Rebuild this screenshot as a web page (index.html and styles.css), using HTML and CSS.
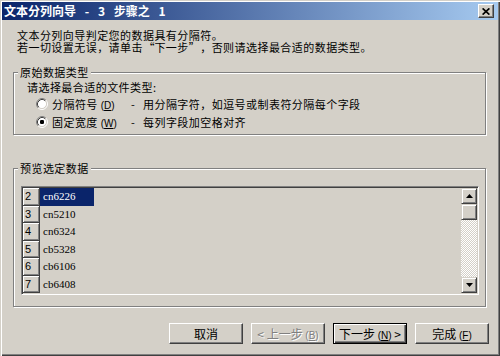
FILE: index.html
```html
<!DOCTYPE html>
<html lang="zh-CN">
<head>
<meta charset="utf-8">
<title>文本分列向导</title>
<link rel="stylesheet" href="styles.css">
</head>
<body>
<div class="window">
  <div class="titlebar">
    <span class="title">文本分列向导 - 3 步骤之 1</span>
    <span class="close-btn"><svg width="8" height="7" viewBox="0 0 8 7"><path d="M0.6 0.4 L7.4 6.6 M7.4 0.4 L0.6 6.6" stroke="#000" stroke-width="1.7" fill="none"/></svg></span>
  </div>
  <div class="content">
    <p class="intro">文本分列向导判定您的数据具有分隔符。<br>若一切设置无误，请单击<span class="q q-open">“</span>下一步<span class="q q-close">”</span>，否则请选择最合适的数据类型。</p>
    <div class="group group-type">
      <div class="legend">原始数据类型</div>
      <div class="prompt">请选择最合适的文件类型:</div>
      <div class="radio-row first">
        <svg class="radio" width="12" height="12" viewBox="0 0 12 12">
          <circle cx="6" cy="6" r="4.5" fill="#fff"/>
          <path d="M2.11 9.89 A5.5 5.5 0 0 1 9.89 2.11" stroke="#808080" fill="none"/>
          <path d="M9.89 2.11 A5.5 5.5 0 0 1 2.11 9.89" stroke="#fff" fill="none"/>
          <path d="M2.82 9.18 A4.5 4.5 0 0 1 9.18 2.82" stroke="#404040" fill="none"/>
          <path d="M9.18 2.82 A4.5 4.5 0 0 1 2.82 9.18" stroke="#d4d0c8" fill="none"/>
        </svg>
        <span class="radio-label">分隔符号 <span class="acc">(<u>D</u>)</span></span>
        <span class="dash">-</span>
        <span class="desc">用分隔字符，如逗号或制表符分隔每个字段</span>
      </div>
      <div class="radio-row second">
        <svg class="radio" width="12" height="12" viewBox="0 0 12 12">
          <circle cx="6" cy="6" r="4.5" fill="#fff"/>
          <path d="M2.11 9.89 A5.5 5.5 0 0 1 9.89 2.11" stroke="#808080" fill="none"/>
          <path d="M9.89 2.11 A5.5 5.5 0 0 1 2.11 9.89" stroke="#fff" fill="none"/>
          <path d="M2.82 9.18 A4.5 4.5 0 0 1 9.18 2.82" stroke="#404040" fill="none"/>
          <path d="M9.18 2.82 A4.5 4.5 0 0 1 2.82 9.18" stroke="#d4d0c8" fill="none"/>
          <rect x="4" y="4" width="4" height="4" rx="1.2" fill="#000"/>
        </svg>
        <span class="radio-label">固定宽度 <span class="acc">(<u>W</u>)</span></span>
        <span class="dash">-</span>
        <span class="desc">每列字段加空格对齐</span>
      </div>
    </div>
    <div class="group group-preview">
      <div class="legend">预览选定数据</div>
      <div class="preview">
        <div class="grid">
          <div class="row"><div class="num">2</div><div class="cell sel">cn6226</div></div>
          <div class="row"><div class="num">3</div><div class="cell">cn5210</div></div>
          <div class="row"><div class="num">4</div><div class="cell">cn6324</div></div>
          <div class="row"><div class="num">5</div><div class="cell">cb5328</div></div>
          <div class="row"><div class="num">6</div><div class="cell">cb6106</div></div>
          <div class="row"><div class="num">7</div><div class="cell">cb6408</div></div>
        </div>
        <div class="vscroll">
          <div class="sbtn"><svg width="7" height="4" viewBox="0 0 7 4"><path d="M0 4 H7 L3.5 0 Z" fill="#000"/></svg></div>
          <div class="thumb"></div>
          <div class="track"></div>
          <div class="sbtn"><svg width="7" height="4" viewBox="0 0 7 4"><path d="M0 0 H7 L3.5 4 Z" fill="#000"/></svg></div>
        </div>
      </div>
    </div>
    <div class="buttons">
      <div class="btn">取消</div>
      <div class="btn disabled">&lt; 上一步 <span class="acc">(<u>B</u>)</span></div>
      <div class="btn default">下一步 <span class="acc">(<u>N</u>)</span> &gt;</div>
      <div class="btn">完成 <span class="acc">(<u>F</u>)</span></div>
    </div>
  </div>
</div>
</body>
</html>
```

FILE: styles.css
```css
* { box-sizing: border-box; }
html, body { margin: 0; padding: 0; }
body {
  background: #d4d0c8;
  font-family: "Noto Sans CJK SC", sans-serif;
  font-size: 12px;
  color: #000;
}
.window {
  width: 500px;
  height: 356px;
  overflow: hidden;
  background: #d4d0c8;
  padding: 2px;
  box-shadow: inset 1px 1px 0 #d4d0c8, inset 2px 2px 0 #fff, inset -1px -1px 0 #404040, inset -2px -2px 0 #808080;
}
.titlebar {
  height: 18px;
  display: flex;
  align-items: center;
  justify-content: space-between;
  padding: 0 4px 0 2px;
  background: linear-gradient(to right, #0a246a, #a6caf0);
}
.title {
  color: #fff;
  font-weight: bold;
  font-size: 12px;
  line-height: 18px;
  word-spacing: 6px;
  white-space: nowrap;
}
.close-btn {
  width: 16px;
  height: 14px;
  background: #d4d0c8;
  border: 1px solid;
  border-color: #fff #404040 #404040 #fff;
  box-shadow: inset -1px -1px 0 #808080;
  display: flex;
  align-items: center;
  justify-content: center;
}
.content {
  padding: 0 12px 0 11px;
}
.intro, .legend, .prompt, .radio-row {
  font-size: 11px;
  letter-spacing: 0.45px;
}
.intro {
  margin: 9px 0 0 4px;
  line-height: 12px;
  white-space: nowrap;
}
.q {
  display: inline-block;
  width: 11.45px;
  letter-spacing: 0;
}
.q-open { text-align: right; }
.q-close { text-align: left; }
.group {
  border: 1px solid #808080;
  box-shadow: 1px 1px 0 #fff, inset 1px 1px 0 #fff;
}
.group-type {
  margin-top: 19px;
  padding-bottom: 4px;
}
.group-preview {
  margin-top: 33px;
  padding-bottom: 11px;
}
.legend {
  width: fit-content;
  margin: -7px 0 0 4px;
  padding: 0 2px;
  line-height: 12px;
  background: #d4d0c8;
}
.prompt {
  margin: 3px 0 0 13px;
  line-height: 13px;
}
.radio-row {
  display: flex;
  align-items: center;
  height: 17px;
  padding-left: 22px;
  white-space: nowrap;
}
.radio-row.first { margin-top: 1px; }
.radio-row.second { margin-top: 1px; }
.radio { flex: none; }
.radio-label {
  width: 79px;
  margin-left: 4px;
}
.acc {
  font-family: "Liberation Sans", sans-serif;
  font-size: 10px;
  letter-spacing: 0;
}
.dash { width: 12px; }
.preview {
  margin: 12px 6px 0 7px;
  height: 109px;
  padding: 1px;
  border: 1px solid;
  border-color: #808080 #fff #fff #808080;
  box-shadow: inset 1px 1px 0 #404040, inset -1px -1px 0 #d4d0c8;
  display: flex;
}
.grid {
  flex: 1;
  overflow: hidden;
}
.row {
  display: flex;
  height: 17.5px;
}
.num {
  width: 17px;
  border-right: 1px solid #404040;
  border-bottom: 1px solid #404040;
  box-shadow: inset 1px 1px 0 #fff, inset -1px -1px 0 #808080;
  font-family: "Liberation Sans", sans-serif;
  font-size: 11px;
  line-height: 16px;
  padding-left: 2px;
}
.cell {
  width: 54px;
  padding-left: 3px;
  font-family: "Liberation Serif", serif;
  font-size: 11px;
  line-height: 17px;
}
.cell.sel {
  background: #0a246a;
  color: #fff;
}
.vscroll {
  width: 16px;
  display: flex;
  flex-direction: column;
}
.sbtn, .thumb {
  height: 16px;
  flex: none;
  background: #d4d0c8;
  border: 1px solid;
  border-color: #d4d0c8 #404040 #404040 #d4d0c8;
  box-shadow: inset 1px 1px 0 #fff, inset -1px -1px 0 #808080;
  display: flex;
  align-items: center;
  justify-content: center;
}
.track {
  flex: 1;
  background-color: #d4d0c8;
  background-image: repeating-conic-gradient(#fff 0 25%, #d4d0c8 0 50%);
  background-size: 2px 2px;
}
.buttons {
  margin: 16px -3px 0 0;
  display: flex;
  justify-content: flex-end;
  gap: 8px;
}
.btn {
  width: 74px;
  height: 21px;
  background: #d4d0c8;
  border: 1px solid;
  border-color: #fff #404040 #404040 #fff;
  box-shadow: inset -1px -1px 0 #808080;
  text-align: center;
  line-height: 19px;
  white-space: nowrap;
}
.btn.default {
  border-color: #000;
  box-shadow: inset 1px 1px 0 #fff, inset -1px -1px 0 #404040, inset -2px -2px 0 #808080;
}
.btn.disabled {
  color: #808080;
  text-shadow: 1px 1px 0 #fff;
}
```
